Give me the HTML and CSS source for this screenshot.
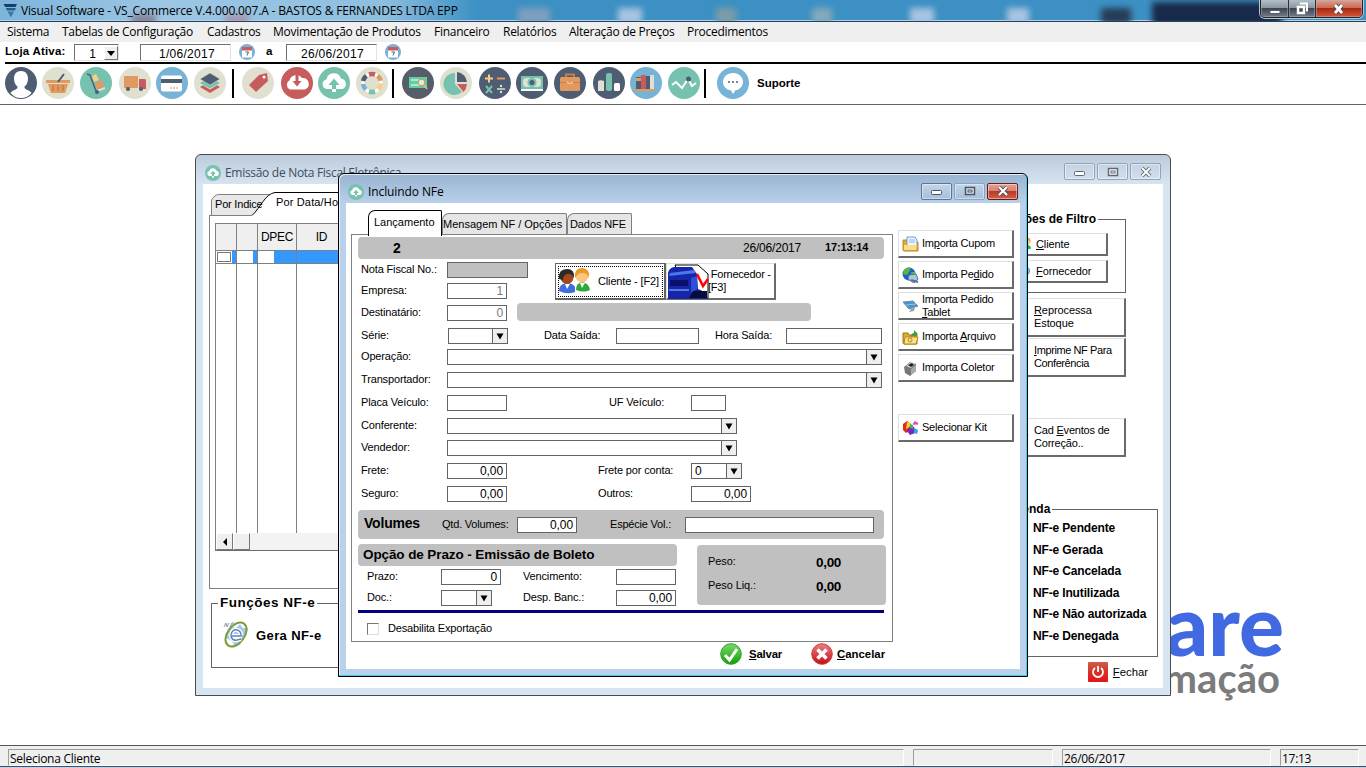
FILE: index.html
```html
<!DOCTYPE html>
<html lang="pt-BR">
<head>
<meta charset="utf-8">
<title>Visual Software - VS_Commerce</title>
<link rel="stylesheet" href="styles.css">
</head>
<body>
<svg class="defs" width="0" height="0">
  <symbol id="cloud" viewBox="0 0 32 32"><circle cx="16" cy="16" r="16" fill="#76c2af"/><path d="M9 22a4.800 4.800 0 0 1-.5-9.500 7.500 7.500 0 0 1 14.500-1 5.500 5.500 0 0 1 1.500 10.500h-6.500v-4h3.500L16 11.500 10.500 18H14v4z" fill="#fff"/><path d="M14 22h4v3h-4z" fill="#fff"/></symbol>
  <symbol id="cal" viewBox="0 0 16 16"><circle cx="8" cy="8" r="8" fill="#77b3d4"/><path d="M3 3.500h10v10H3z" fill="#fff"/><path d="M3 3h10v3.500H3z" fill="#c75c5c"/><path d="M6.500 8h3l-1.500 3.500" fill="none" stroke="#4f5d73"/></symbol>
  <symbol id="arrow" viewBox="0 0 16 16"><path d="M4 5h8l-2.500 4.500L8 12 6.500 9.500z" fill="#000"/></symbol>
  <symbol id="people" viewBox="0 0 34 26"><path d="M1 23q0-7 7-8 7 0 9 4v5q-8 3-16-1z" fill="#3d6fe0"/><path d="M18 22q0-7 6-8 7 1 8 8-6 3-14 0z" fill="#2fa83a"/><circle cx="9" cy="9.500" r="6.500" fill="#a4481a"/><path d="M1 11Q0 1 9 1q8 0 7 9Q13 5 9 6q-4 1-4 6z" fill="#2a2a2a"/><circle cx="24" cy="8" r="6.500" fill="#fbc580"/><path d="M17 10Q16 0 24 0q8 0 7 10-1-5-7-5-4 0-7 5z" fill="#e79a28"/><path d="M7 16l2 5 3-5M22 15l2 5 3-5" fill="#fff"/></symbol>
</svg>

<header class="titlebar">
  <i class="blob b1"></i><i class="blob b2"></i><i class="blob b3"></i><i class="blob b4"></i><i class="blob b5"></i><i class="blob b6"></i><i class="blob b7"></i><i class="blob b8"></i><i class="blob b9"></i><i class="blob b10"></i>
  <svg class="applogo" width="16" height="16" viewBox="0 0 16 16"><path d="M0 1h14l-1.500 3H1.500z" fill="#173f6b"/><path d="M2 5h11l-1.200 2.500H3.200z" fill="#285e90"/><path d="M4 8.500h7L7.500 15z" fill="#3978a8"/><path d="M0 1l7.500 14" stroke="#8fb8d8"/></svg>
  <span class="apptitle">Visual Software - VS_Commerce V.4.000.007.A - BASTOS &amp; FERNANDES LTDA EPP</span>
  <div class="appbtns">
    <span class="ab ab-min"><svg width="12" height="14"><path d="M1 8.500h10v3H1z" fill="#fff" stroke="#555d68"/></svg></span>
    <span class="ab ab-max"><svg width="14" height="14"><path d="M5 1.500h7v8" fill="none" stroke="#fff" stroke-width="2"/><path d="M3 5h6v6H3z" fill="none" stroke="#fff" stroke-width="2.500"/></svg></span>
    <span class="ab ab-close"><svg width="14" height="14"><path d="M3 3l7 8M10 3l-7 8" stroke="#4a4a58" stroke-width="4.500"/><path d="M3 3l7 8M10 3l-7 8" stroke="#fff" stroke-width="2.800"/></svg></span>
  </div>
</header>

<nav class="menu">
  <span class="i1">Sistema</span><span class="i2">Tabelas de Configuração</span><span class="i3">Cadastros</span><span class="i4">Movimentação de Produtos</span><span class="i5">Financeiro</span><span class="i6">Relatórios</span><span class="i7">Alteração de Preços</span><span>Procedimentos</span>
</nav>

<section class="filters">
  <b class="loja">Loja Ativa:</b>
  <span class="inset store"><span>1</span><i><svg width="9" height="6"><path d="M0 0h8L4 5z"/></svg></i></span>
  <span class="inset date d1">1/06/2017</span>
  <svg width="16" height="16"><use href="#cal"/></svg>
  <b class="to">a</b>
  <span class="inset date d2">26/06/2017</span>
  <svg width="16" height="16"><use href="#cal"/></svg>
</section>

<section class="toolbar">
  <svg class="ti" viewBox="0 0 32 32"><circle cx="16" cy="16" r="16" fill="#4f5d73"/><path d="M16 4c4.500 0 7 3 7 7.500 0 4-1.500 6.500-3.500 8 0 2 .5 2.500 4 4 1.500.7 2.500 1.500 3 2.500-2.500 3-6 5-10.500 5S8 29 5.500 26c.5-1 1.500-1.800 3-2.500 3.500-1.500 4-2 4-4-2-1.500-3.500-4-3.500-8C9 7 11.500 4 16 4z" fill="#fff"/></svg>
  <svg class="ti g5" viewBox="0 0 32 32"><circle cx="16" cy="16" r="16" fill="#e0e0d1"/><path d="M4 13h24v3H4zM6 17h20l-3 9H9z" fill="#e0995e"/><path d="M11 18v6M16 18v6M21 18v6" stroke="#c77f49" stroke-width="1.500"/><path d="M22 7l-6 8" stroke="#4f5d73" stroke-width="2"/></svg>
  <svg class="ti g6" viewBox="0 0 32 32"><circle cx="16" cy="16" r="16" fill="#76c2af"/><path d="M7 7l3 1 6 16" fill="none" stroke="#4f5d73" stroke-width="1.500"/><path d="M12 9l4-2 3 6-5 2z" fill="#f5cf87"/><path d="M15 16l6-3 3 7-6 3z" fill="#e0995e"/><path d="M17 24l8-3" stroke="#e0e0d1" stroke-width="2"/><circle cx="17" cy="25" r="2" fill="#4f5d73"/></svg>
  <svg class="ti g7" viewBox="0 0 32 32"><circle cx="16" cy="16" r="16" fill="#e0e0d1"/><path d="M5 9h14v12H5z" fill="#e0995e"/><path d="M20 12h6q1 0 1 2v8h-7z" fill="#c75c5c"/><circle cx="9" cy="22" r="2" fill="#4f5d73"/><circle cx="22" cy="22" r="2" fill="#4f5d73"/></svg>
  <svg class="ti g5" viewBox="0 0 32 32"><circle cx="16" cy="16" r="16" fill="#77b3d4"/><rect x="5" y="8.500" width="21" height="16" rx="2" fill="#fff"/><path d="M5 12h21v4H5z" fill="#4f5d73"/><path d="M14 21h2m1 0h2m1 0h2" stroke="#e0995e"/></svg>
  <svg class="ti g6" viewBox="0 0 32 32"><circle cx="16" cy="16" r="16" fill="#e0e0d1"/><path d="M16 14l10 6-10 6-10-6z" fill="#c75c5c"/><path d="M16 11l10 5.500-10 6-10-6z" fill="#e0e0d1"/><path d="M16 10l10 6-10 5.500L6 16z" fill="#76c2af"/><path d="M16 6l10 6-10 6-10-6z" fill="#4f5d73" stroke="#e0e0d1" stroke-width=".5"/></svg>
  <i class="sep s1"></i>
  <svg class="ti g8" viewBox="0 0 32 32"><circle cx="16" cy="16" r="16" fill="#e0e0d1"/><path d="M17 8l8-2 1 8-12 11-7-7z" fill="#c75c5c"/><circle cx="22" cy="10" r="1.500" fill="#fff"/></svg>
  <svg class="ti g7" viewBox="0 0 32 32"><circle cx="16" cy="16" r="16" fill="#c75c5c"/><path d="M9 22.500a5 5 0 0 1-.5-9A7 7 0 0 1 21 11a6 6 0 0 1 3 11.500z" fill="#fff"/><path d="M14.500 7h3v7h3L16 19.500 11.500 14h3z" fill="#c75c5c"/></svg>
  <svg class="ti g5"><use href="#cloud"/></svg>
  <svg class="ti g6" viewBox="0 0 32 32"><circle cx="16" cy="16" r="16" fill="#e0e0d1"/><circle cx="16" cy="16" r="9" fill="none" stroke="#fff" stroke-width="3"/><g fill="none" stroke-width="4.500"><path d="M13 7.500q3-1 6 0" stroke="#c75c5c"/><path d="M21.500 8.800q2.500 2 3.200 5" stroke="#e0995e"/><path d="M25 16.500q-.5 3.500-3 5.700" stroke="#f5cf87"/><path d="M19 24.500q-3 1-6 0" stroke="#76c2af"/><path d="M10 22.500q-2.500-2-3-5.500" stroke="#77b3d4"/><path d="M7 14q.8-3 3.300-5.200" stroke="#4f5d73"/></g></svg>
  <i class="sep s2"></i>
  <svg class="ti g8" viewBox="0 0 32 32"><circle cx="16" cy="16" r="16" fill="#565f69"/><rect x="7" y="10" width="18" height="11" fill="#5fcfa4"/><path d="M9 13h8M9 18h8" stroke="#fff"/><circle cx="19.500" cy="15.500" r="3.300" fill="#dceee2" stroke="#e98a4f"/><path d="M22 18l3 4" stroke="#f7b384" stroke-width="1.500"/></svg>
  <svg class="ti g6" viewBox="0 0 32 32"><circle cx="16" cy="16" r="16" fill="#e0e0d1"/><path d="M15 6v11l7 8A11 11 0 1 1 15 6z" fill="#76c2af"/><path d="M17 5a11 11 0 0 1 10 10H17z" fill="#4f5d73"/><path d="M17 17h10q-.5 5-3.500 8z" fill="#c75c5c"/></svg>
  <svg class="ti g7" viewBox="0 0 32 32"><circle cx="16" cy="16" r="16" fill="#4f5d73"/><path d="M6 11.500h8M10 7.500v8" stroke="#f5cf87" stroke-width="2"/><path d="M18 11.500h8" stroke="#e0995e" stroke-width="2"/><path d="M7 19l6 7M13 19l-6 7" stroke="#76c2af" stroke-width="2"/><path d="M18 22h8" stroke="#e0e0d1" stroke-width="1.500"/><circle cx="22" cy="19" r="1.200" fill="#e0e0d1"/><circle cx="22" cy="25" r="1.200" fill="#e0e0d1"/></svg>
  <svg class="ti g5" viewBox="0 0 32 32"><circle cx="16" cy="16" r="16" fill="#4f5d73"/><path d="M5 10h22v14H5z" fill="#fff"/><path d="M5 9h22v13H5z" fill="#76c2af"/><path d="M9 11h14l2 2v5l-2 2H9l-2-2v-5z" fill="#e0e0d1"/><circle cx="16" cy="15.500" r="4.500" fill="#76c2af"/><circle cx="16" cy="15.500" r="2.500" fill="#4f5d73"/></svg>
  <svg class="ti g6" viewBox="0 0 32 32"><circle cx="16" cy="16" r="16" fill="#4f5d73"/><path d="M12 10V7.500h8V10" fill="none" stroke="#c77f49" stroke-width="2"/><rect x="6" y="10" width="20" height="14" rx="1.500" fill="#e0995e"/><path d="M6 15.500h20" stroke="#c77f49"/><path d="M13 15q3 3 6 0" fill="none" stroke="#f5cf87" stroke-width="1.500"/></svg>
  <svg class="ti g7" viewBox="0 0 32 32"><circle cx="16" cy="16" r="16" fill="#4f5d73"/><path d="M5 14q2.500-1.500 6 0v10H5z" fill="#e0e0d1"/><rect x="13" y="6" width="6" height="18" rx="2" fill="#76c2af"/><rect x="21" y="16" width="6" height="8" rx="1.500" fill="#fff"/></svg>
  <svg class="ti g5" viewBox="0 0 32 32"><circle cx="16" cy="16" r="16" fill="#77b3d4"/><path d="M4 22h21v2H4z" fill="#e0995e"/><path d="M6 10h5v12H6z" fill="#4f5d73"/><path d="M6 11h5v3H6z" fill="#e0995e"/><path d="M11 8h5v14h-5z" fill="#c75c5c"/><path d="M16 9h4v13h-4z" fill="#4f5d73"/><path d="M20 8h4v14h-4z" fill="#e0e0d1"/></svg>
  <svg class="ti g6" viewBox="0 0 32 32"><circle cx="16" cy="16" r="16" fill="#76c2af"/><path d="M4 18l4-3 6 6 6-9 4 7 4-3" fill="none" stroke="#fff" stroke-width="2"/><circle cx="20.500" cy="12" r="2.500" fill="#4f5d73"/></svg>
  <i class="sep s3"></i>
  <svg class="ti g9" viewBox="0 0 32 32"><circle cx="16" cy="16" r="16" fill="#77b3d4"/><path d="M16 6c6 0 10 4 10 9 0 4-3 7.500-7.500 8.300L16 27l-2-3.600C9 22.800 6 19 6 15c0-5 4-9 10-9z" fill="#fff"/><path d="M11 15h2m2 0h2m2 0h2" stroke="#4f5d73" stroke-width="1.500"/></svg>
  <b class="suporte">Suporte</b>
</section>

<main class="desk">
  <div class="brand"><div class="brand1">are</div><div class="brand2">mação</div></div>

  <section class="win back">
    <div class="wtitle"><svg width="16" height="16"><use href="#cloud"/></svg><span>Emissão de Nota Fiscal Eletrônica</span>
      <div class="wbtns"><span class="wb"><svg width="12" height="10"><rect x=".5" y="4.500" width="10" height="4" rx="1" fill="#fff" stroke="#5f6776"/></svg></span><span class="wb"><svg width="12" height="10"><rect x="1.500" y="1.500" width="9" height="7" fill="#fff" stroke="#5f6776" stroke-width="1.500"/><rect x="4" y="4" width="4" height="2" fill="none" stroke="#5f6776"/></svg></span><span class="wb"><svg width="12" height="10"><path d="M2 1l8 8M10 1L2 9" stroke="#5f6776" stroke-width="3.800"/><path d="M2 1l8 8M10 1L2 9" stroke="#fff" stroke-width="1.800"/></svg></span></div>
    </div>
    <div class="wbody backbody">
      <div class="left">
        <div class="btabs"><svg width="190" height="25"><path d="M2.500 24V9q3-5 6-5.500h52L50 24" fill="#e8e8e8" stroke="#808080"/><path d="M43 24.500C52 16 56 3 66 1.500h124V25" fill="#fff" stroke="#000"/><path d="M0 24.500h43" stroke="#808080"/></svg><span class="bt1">Por Indice</span><span class="bt2">Por Data/Hora</span></div>
        <div class="bpanel">
          <div class="grid">
            <div class="gh"><span class="c1"></span><span class="c2"></span><span class="c3">DPEC</span><span class="c4">ID</span></div>
            <div class="gr"><span class="c1"><i class="w chk"></i></span><span class="c2"><i class="w"></i></span><span class="c3"><i class="w"></i></span><span class="c4"></span></div>
            <div class="gb"><span class="c1"></span><span class="c2"></span><span class="c3"></span><span class="c4"></span></div>
            <div class="gs"><i><svg width="6" height="8"><path d="M5 0v8L1 4z"/></svg></i><i></i></div>
          </div>
        </div>
        <fieldset class="funcs"><legend>Funções NF-e</legend><div class="gera"><svg width="28" height="28" viewBox="0 0 28 28"><path d="M8 5l6 2 4-4 3 4 5 0-2 8-4 3-2 6-5 2-3-6-6-3 1-5z" fill="#a8c8f2"/><ellipse cx="14" cy="13.500" rx="8.500" ry="13.500" transform="rotate(36 14 13.500)" fill="none" stroke="#7a9f38" stroke-width="2"/><path d="M20 15H9q1 5 6 4l4-1M9 14q1-6 6-5 4 1 4 5" fill="none" stroke="#fff" stroke-width="4"/><path d="M20 15H9q1 5 6 4l4-1M9 14q1-6 6-5 4 1 4 5" fill="none" stroke="#6285b1" stroke-width="1.500"/><path d="M2 6l2-4 1 4 2-4M8 6l2-4h2" fill="none" stroke="#8695a8"/></svg><b>Gera NF-e</b></div></fieldset>
      </div>
      <div class="right">
        <fieldset class="filtro"><legend>Opções de Filtro</legend><div class="btn fb"><svg width="17" height="14"><use href="#people"/></svg><span><u>C</u>liente</span></div><div class="btn fb"><svg width="17" height="14"><circle cx="10" cy="7" r="4.500" fill="#9fd0f0" stroke="#3f85c0"/></svg><span><u>F</u>ornecedor</span></div></fieldset>
        <div class="btn rb r1"><svg width="12" height="12"><circle cx="5" cy="7" r="2.500" fill="#d32a16"/></svg><span><u>R</u>eprocessa<br>Estoque</span></div>
        <div class="btn rb r2"><span><u>I</u>mprime NF Para<br>Conferência</span></div>
        <div class="btn rb r3"><svg width="12" height="20"><path d="M6 5l2 3-2 3zM5 16l3 2" stroke="#777" fill="#777"/></svg><span>Cad <u>E</u>ventos de<br>Correção..</span></div>
        <fieldset class="legenda"><legend>Legenda</legend><b>NF-e Pendente</b><b>NF-e Gerada</b><b>NF-e Cancelada</b><b>NF-e Inutilizada</b><b>NF-e Não autorizada</b><b>NF-e Denegada</b></fieldset>
        <div class="fechar"><svg width="20" height="20"><defs><linearGradient id="rg" x2="0" y2="1"><stop stop-color="#c9604a"/><stop offset=".5" stop-color="#d93126"/><stop offset="1" stop-color="#e5131b"/></linearGradient></defs><rect width="20" height="20" rx="1" fill="url(#rg)"/><path d="M7 6a5 5 0 1 0 6 0M10 4v6" fill="none" stroke="#fff" stroke-width="1.800"/></svg><span><u>F</u>echar</span></div>
      </div>
    </div>
  </section>

  <section class="win front">
    <div class="wtitle"><svg width="16" height="16"><use href="#cloud"/></svg><span>Incluindo NFe</span>
      <div class="wbtns"><span class="wb"><svg width="12" height="10"><rect x=".5" y="4.500" width="10" height="4" rx="1" fill="#fff" stroke="#4a5160"/></svg></span><span class="wb dim"><svg width="12" height="10"><rect x="1.500" y="1.500" width="9" height="7" fill="#e8eef5" stroke="#4a5160" stroke-width="1.500"/><rect x="4" y="4" width="4" height="2" fill="none" stroke="#4a5160"/></svg></span><span class="wb red"><svg width="12" height="10"><path d="M2 1l8 8M10 1L2 9" stroke="#5a4a52" stroke-width="4"/><path d="M2 1l8 8M10 1L2 9" stroke="#fff" stroke-width="2.200"/></svg></span></div>
    </div>
    <div class="wbody frontbody">
      <div class="formcol">
        <div class="tabs"><span class="tab on">Lançamento</span><span class="tab t2">Mensagem NF / Opções</span><span class="tab t3">Dados NFE</span></div>
        <div class="panel">
          <div class="gbar head"><b class="num">2</b><span class="hd">26/06/2017</span><b class="hh">17:13:14</b></div>
          <div class="rows">
            <div class="row"><label>Nota Fiscal No.:</label><span class="f w81 off"></span>
              <div class="bigbtns"><div class="btn big focus"><svg width="34" height="26"><use href="#people"/></svg><span>Cliente - [F2]</span></div><div class="btn big"><svg class="truck" width="42" height="35" viewBox="0 0 42 35"><path d="M8 1h23l10 9v24H20z" fill="#fff" stroke="#000"/><path d="M1 9q1-5 6-6h18l5 7 1 15q8 2 9 10H1z" fill="#1726a8"/><path d="M3 9l24-3 2 3-27 3z" fill="#4c78ee"/><path d="M3 16h18v6H3z" fill="#0b1166"/><path d="M2 25h20v2H2z" fill="#5578e8"/><path d="M24 14l6-2v13l-6 4z" fill="#2d50d8"/><path d="M26 27h14v7H22z" fill="#080d3c"/><path d="M30 10l6 12 5-7" fill="none" stroke="#f00" stroke-width="2.500"/></svg><span class="forn">&nbsp;Fornecedor -<br>[F3]</span></div></div>
            </div>
            <div class="row m5"><label>Empresa:</label><span class="f w60 n ro">1</span></div>
            <div class="row m6"><label>Destinatário:</label><span class="f w60 n ro">0</span><span class="dest"></span></div>
            <div class="row m7"><label>Série:</label><span class="f w60 combo x1"><svg width="16" height="14"><use href="#arrow"/></svg></span><label class="la">Data Saída:</label><span class="f w83"></span><label class="lb">Hora Saída:</label><span class="f w96"></span></div>
            <div class="row m5"><label>Operação:</label><span class="f w435 combo"><svg width="16" height="14"><use href="#arrow"/></svg></span></div>
            <div class="row m7"><label>Transportador:</label><span class="f w435 combo"><svg width="16" height="14"><use href="#arrow"/></svg></span></div>
            <div class="row m7"><label>Placa Veículo:</label><span class="f w60"></span><label class="lc">UF Veículo:</label><span class="f w35"></span></div>
            <div class="row m7"><label>Conferente:</label><span class="f w290 combo"><svg width="16" height="14"><use href="#arrow"/></svg></span></div>
            <div class="row m6"><label>Vendedor:</label><span class="f w290 combo"><svg width="16" height="14"><use href="#arrow"/></svg></span></div>
            <div class="row m7"><label>Frete:</label><span class="f w60 n">0,00</span><label class="ld">Frete por conta:</label><span class="f w51 combo">0<svg width="16" height="14"><use href="#arrow"/></svg></span></div>
            <div class="row m7"><label>Seguro:</label><span class="f w60 n">0,00</span><label class="ld">Outros:</label><span class="f w60 n">0,00</span></div>
          </div>
          <div class="gbar vol"><b>Volumes</b><label class="lq">Qtd. Volumes:</label><span class="f w60 n vq">0,00</span><label class="le">Espécie Vol.:</label><span class="f w189"></span></div>
          <div class="lower">
            <div class="prazo">
              <div class="gbar op"><b>Opção de Prazo - Emissão de Boleto</b></div>
              <div class="row p1"><label>Prazo:</label><span class="f w60 n">0</span><label class="lv">Vencimento:</label><span class="f w60"></span></div>
              <div class="row p2"><label>Doc.:</label><span class="f w51 combo"><svg width="16" height="14"><use href="#arrow"/></svg></span><label class="lw">Desp. Banc.:</label><span class="f w60 n">0,00</span></div>
            </div>
            <div class="gbar peso"><div><span>Peso:</span><b>0,00</b></div><div><span>Peso Liq.:</span><b>0,00</b></div></div>
          </div>
          <div class="navy"></div>
          <div class="desab"><i></i><span>Desabilita Exportação</span></div>
        </div>
        <div class="actions">
          <svg width="22" height="22"><defs><linearGradient id="gg" x2="0" y2="1"><stop stop-color="#7ad86a"/><stop offset="1" stop-color="#12a008"/></linearGradient><linearGradient id="r2" x2="0" y2="1"><stop stop-color="#ea7f82"/><stop offset="1" stop-color="#c40d16"/></linearGradient></defs><circle cx="11" cy="11" r="10.300" fill="url(#gg)" stroke="#2ca522"/><path d="M5 12l4.500 5L17 6" fill="none" stroke="#fff" stroke-width="3"/></svg><b class="sv"><u>S</u>alvar</b>
          <svg width="22" height="22"><circle cx="11" cy="11" r="10.300" fill="url(#r2)" stroke="#cf3c42"/><path d="M6.500 6.500l9 9M15.500 6.500l-9 9" stroke="#fff" stroke-width="3.600"/></svg><b class="cc"><u>C</u>ancelar</b>
        </div>
      </div>
      <div class="side">
        <div class="btn sb"><svg width="18" height="16"><path d="M1 4h4l1 2h10v9H2q-1 0-1-2z" fill="#e0ab35" stroke="#b8862a"/><path d="M5 1h8l2 3v6H5z" fill="#eaf4ff" stroke="#6e9fcc"/><path d="M7 4h6M7 6h6" stroke="#8db8e0"/><path d="M2 9h13l-1 5H2z" fill="#fadd86"/></svg><span>Im<u>p</u>orta Cupom</span></div>
        <div class="btn sb"><svg width="18" height="16"><circle cx="7" cy="7" r="6.500" fill="#2460c0"/><path d="M2 3q4-4 7-2L7 5 5 8 1 7zM9 5l4 0v4l-3 1z" fill="#54b848"/><path d="M7 8l7-1 2 5-4 4-6-4z" fill="#a9c7e3" stroke="#527499"/><path d="M9 13l7 2" stroke="#527499" stroke-width="2"/></svg><span>Importa Pe<u>d</u>ido</span></div>
        <div class="btn sb"><svg width="18" height="16"><path d="M1 4l10-1 5 5-9 3z" fill="#4795d1" stroke="#7d8790"/><path d="M9 11l-2 3 5-1 1-4z" fill="#9aa2aa"/><path d="M4 7l10-1" stroke="#8fc3ea"/></svg><span>Importa Pedido<br><u>T</u>ablet</span></div>
        <div class="btn sb"><svg width="18" height="16"><path d="M1 4h5l1 2h8v9H2q-1 0-1-2z" fill="#e0a92c" stroke="#9c7419"/><path d="M3 8h13l-2 7H2z" fill="#fbe087" stroke="#b88a25"/><path d="M9 8q0-4 3-4V1l4 4-4 3V6" fill="#3e9a3a"/><circle cx="8" cy="11" r="2" fill="none" stroke="#b88a25"/></svg><span>Importa <u>A</u>rquivo</span></div>
        <div class="btn sb"><svg width="18" height="16"><path d="M2 7l6-5 6 2v7l-6 5-5-3z" fill="#777"/><path d="M4 6l5-4 4 2-4 4z" fill="#d8d8d8"/><path d="M6 5l4-2 2 2-3 2z" fill="#222"/><path d="M9 9l5-4v6l-5 4z" fill="#aaa"/></svg><span>Importa Coletor</span></div>
        <div class="btn sb kit"><svg width="18" height="16"><path d="M1 4l4-3 4 3v6l-5 3-3-3z" fill="#e22a20"/><path d="M5 2l3 1v4l-4 2z" fill="#f4d823"/><path d="M8 6l4 1 1 6-5 2-3-4z" fill="#7c24c4"/><path d="M8 4l3 1v4L8 8z" fill="#31c141"/><path d="M12 8l4 2-1 4-3-1z" fill="#24a6df"/><path d="M12 2l4 2M11 4l4-1" stroke="#d84bd8" stroke-width="2"/></svg><span>Selecionar Kit</span></div>
      </div>
    </div>
  </section>
</main>

<footer class="status"><span class="st1">Seleciona Cliente</span><span class="st2"></span><span class="st3">26/06/2017</span><span class="st4">17:13</span></footer>
</body>
</html>
```
FILE: styles.css
```css
* { box-sizing: border-box; }
body { margin: 0; width: 1366px; height: 768px; overflow: hidden; background: #fff; color: #000; font: 11px/13px "Liberation Sans", Arial, sans-serif; display: flex; flex-direction: column; position: relative; }
.defs { position: absolute; }
i { font-style: normal; display: inline-block; }
svg { display: block; flex: none; }
u { text-underline-offset: 1px; }

.titlebar { height: 22px; flex: none; display: flex; align-items: center; position: relative; overflow: hidden; padding-left: 3px; background: linear-gradient(90deg, #7db4da 0, #9cc6e4 12%, #8fbfdf 28%, #3c90c3 35%, #3c90c3 100%); border-bottom: 1px solid #24425f; box-shadow: inset 0 -1px #b4d2e8; }
.applogo { margin-right: 2px; position: relative; }
.apptitle { font: 12px/20px "Open Sans", "Noto Sans", sans-serif; letter-spacing: -.16px; white-space: nowrap; position: relative; }
.blob { position: absolute; filter: blur(3px); top: 8px; width: 24px; height: 16px; background: #a9c4e2; }
.b1 { left: 518px; width: 32px; background: #7f9fbf; }
.b2 { left: 618px; }
.b3 { left: 716px; width: 20px; background: #7c9ca8; }
.b4 { left: 812px; width: 20px; background: #84aabb; }
.b5 { left: 910px; }
.b6 { left: 1007px; width: 22px; }
.b7 { left: 1101px; width: 30px; background: #263c55; }
.b8 { left: 1152px; top: 2px; width: 130px; height: 24px; background: #182a49; }
.b9 { left: 132px; top: 14px; width: 24px; background: #77566a; opacity: .6; }
.b10 { left: 225px; top: 14px; width: 24px; background: #b36b84; opacity: .5; }
.appbtns { position: absolute; left: 1260px; top: -1px; display: flex; height: 19px; width: 103px; border: 1px solid #20242c; border-radius: 0 0 5px 5px; overflow: hidden; box-shadow: 0 0 0 1px #b9c4cc; }
.ab { display: flex; align-items: center; justify-content: center; border-right: 1px solid #2b2f36; background: linear-gradient(#b4c0c8 0, #8c969f 45%, #3f4653 50%, #737c88 100%); box-shadow: inset 0 0 0 1px #aeb8c077; }
.ab-min { width: 28px; }
.ab-max { width: 27px; }
.ab-close { flex: 1; border: 0; background: linear-gradient(#dca193 0, #cc6955 45%, #a72a12 50%, #d4553b 100%); }

.menu { height: 20px; flex: none; background: #efefef; display: flex; padding-left: 7px; font: 12px/19px "Open Sans", "Noto Sans", sans-serif; letter-spacing: -.28px; white-space: nowrap; }
.i1 { width: 55px; } .i2 { width: 145px; } .i3 { width: 66px; } .i4 { width: 161px; } .i5 { width: 69px; } .i6 { width: 66px; } .i7 { width: 118px; }

.filters { height: 20px; flex: none; display: flex; align-items: flex-start; padding: 2px 0 0 5px; }
.loja { width: 69px; line-height: 15px; font-size: 11.500px; letter-spacing: .2px; white-space: nowrap; }
.inset { height: 17px; border: 1px solid #e2e2e2; border-top-color: #707070; border-left-color: #707070; font-size: 12px; line-height: 18px; text-align: right; background: #fff; }
.store { width: 45px; display: flex; justify-content: flex-end; gap: 8px; }
.store i { width: 14px; height: 14px; margin-top: 1px; background: #efefef; border: 1px solid; border-color: #fff #777 #777 #fff; padding: 4px 0 0 2px; }
.date { width: 91px; padding-right: 15px; margin-right: 8px; letter-spacing: .3px; }
.d1 { margin-left: 21px; }
.d2 { padding-right: 12px; }
.to { margin-left: 11px; width: 20px; line-height: 15px; font-size: 11.500px; }

.toolbar { height: 43px; flex: none; display: flex; align-items: center; border-bottom: 1px solid #646464; padding-left: 5px; background: linear-gradient(#000, #000) 5px 0 / 100% 2px no-repeat; }
.ti { width: 32px; height: 32px; margin-bottom: 1px; }
.g5 { margin-left: 5px; } .g6 { margin-left: 6px; } .g7 { margin-left: 7px; } .g8 { margin-left: 8px; } .g9 { margin-left: 11px; }
.sep { width: 2px; height: 29px; background: #000; }
.s1 { margin-left: 6px; } .s2 { margin-left: 4px; } .s3 { margin-left: 4px; }
.suporte { margin-left: 8px; font-size: 11.500px; }

.desk { flex: 1; position: relative; }
.brand { position: absolute; right: 82px; top: 478px; font-family: Lato, sans-serif; font-weight: 700; text-align: right; }
.brand1 { font-size: 84px; line-height: 81px; color: #4169e1; font-weight: 900; }
.brand2 { font-size: 40px; line-height: 36px; margin: -4px 4px 0 0; color: #7b7b7b; }

/* windows */
.win { position: absolute; border: 1px solid #4b4b4b; border-radius: 6px 6px 0 0; padding: 0 7px 7px; display: flex; flex-direction: column; }
.wtitle { height: 29px; flex: none; display: flex; align-items: center; font: 12px/16px "Open Sans", "Noto Sans", sans-serif; letter-spacing: -.1px; }
.wtitle > span { margin-left: 4px; white-space: nowrap; }
.wbody { flex: 1; background: #fff; display: flex; min-height: 0; }
.wbtns { margin: -2px 1px 0 auto; display: flex; gap: 2px; }
.wb { width: 31px; height: 17px; border: 1px solid #7f91ad; border-radius: 2px; box-shadow: inset 0 0 0 1px #ffffff70; display: flex; align-items: center; justify-content: center; }
.back { left: 195px; top: 49px; width: 976px; height: 542px; background: linear-gradient(#bccbdb, #d7e4f2 30px); }
.back .wtitle { color: #444d58; padding: 6px 1px 0 2px; letter-spacing: -.3px; }
.back .wb { border-color: #94a3bb; }
.front { left: 338px; top: 68px; width: 690px; height: 504px; background: linear-gradient(#99b4d1, #b9d1ea 30px); border-color: #000; box-shadow: inset -1px -1px #40cfe6, inset 1px 1px #e4eef8; }
.front .wtitle { padding: 7px 1px 0 2px; }
.front .wb { background: linear-gradient(#c3d5e8, #a6bfda); border-color: #5d7596; }
.front .dim { border-color: #8aa4c4; }
.front .red { border-color: #641c1c; background: linear-gradient(#e4a091 0, #d9816f 48%, #b93b26 50%, #ce604a); }

.btn { background: #fff; border: 1px solid; border-color: #dedede #6a6a6a #6a6a6a #dedede; border-width: 1px 2px 2px 1px; display: flex; align-items: center; white-space: nowrap; line-height: 13px; }

/* back window */
.backbody { justify-content: space-between; }
.left { width: 190px; padding: 7px 0 0 6px; display: flex; flex-direction: column; }
.btabs { height: 25px; flex: none; position: relative; }
.bt1 { position: absolute; left: 6px; top: 7px; letter-spacing: -.2px; }
.bt2 { position: absolute; left: 67px; top: 5px; letter-spacing: .15px; }
.bpanel { height: 373px; flex: none; width: 300px; border: 1px solid #808080; border-top: 0; padding: 7px 0 0 5px; }
.grid { height: 328px; border: 1px solid #808080; border-right: 0; border-bottom: 2px solid #6c6c6c; }
.gh, .gr, .gb { display: flex; }
.gh { height: 26px; background: #efefef; line-height: 26px; text-align: center; font-size: 12px; letter-spacing: -.3px; }
.gr { height: 14px; background: #3399ff; border: 1px solid #808080; border-width: 1px 0; }
.gb { height: 269px; }
.grid span { border-right: 1px solid #808080; flex: none; display: flex; justify-content: center; }
.c1 { width: 21px; } .c2 { width: 21px; } .c3 { width: 39px; } .c4 { width: 50px; }
.gr span { justify-content: flex-start; }
.w { width: 16px; height: 12px; background: #fff; }
.chk { outline: 1px solid #777; outline-offset: -2px; }
.gs { height: 17px; background: #f3f3f3; display: flex; }
.gs i { width: 17px; background: #efefef; border: 1px solid; border-color: #fff #777 #777 #fff; padding: 4px 0 0 5px; }
fieldset { border: 1px solid #646464; margin: 0; min-width: 0; padding: 0; }
legend { font-weight: 700; padding: 0 2px; }
.funcs { width: 300px; height: 73px; margin: 6px 0 0 2px; }
.funcs legend { margin-left: 6px; font-size: 13.500px; line-height: 16px; letter-spacing: .5px; }
.gera { display: flex; align-items: center; gap: 6px; padding: 10px 0 0 10px; font-size: 13px; letter-spacing: .4px; }
.right { width: 180px; padding-top: 28px; display: flex; flex-direction: column; align-items: flex-end; }
.filtro { width: 180px; height: 81px; margin-right: 37px; padding: 7px 17px 0 22px; display: flex; flex-direction: column; align-items: flex-end; }
.filtro legend { margin-left: auto; margin-right: 10px; font-size: 12px; line-height: 14px; }
.filtro .fb { width: 110px; height: 23px; margin-bottom: 4px; padding-left: 16px; gap: 4px; }
.rb { width: 140px; height: 39px; margin-right: 37px; padding-left: 47px; letter-spacing: -.1px; }
.rb svg { margin: 0 2px 0 -14px; }
.fb span { letter-spacing: -.1px; }
.r1 { margin-top: 5px; }
.r2 { margin-top: 1px; letter-spacing: -.4px; }
.r3 { margin-top: 41px; letter-spacing: -.2px; }
.legenda { width: 170px; height: 154px; margin: 46px 5px 0 0; padding: 2px 0 0 44px; display: flex; flex-direction: column; font-size: 12px; line-height: 21.600px; letter-spacing: -.15px; }
.legenda legend { margin-left: -34px; font-size: 12px; line-height: 13px; letter-spacing: 0; }
.fechar { display: flex; align-items: center; gap: 5px; margin: 5px 15px 0 0; font-size: 11.300px; }

/* front window */
.frontbody { justify-content: space-between; }
.formcol { width: 546px; padding: 7px 0 0 5px; display: flex; flex-direction: column; }
.tabs { height: 25px; flex: none; display: flex; align-items: flex-end; padding-left: 17px; white-space: nowrap; }
.tab { height: 22px; background: #e5e5e5; border: 1px solid #808080; border-bottom: 0; border-radius: 7px 2px 0 0; line-height: 20px; font-size: 11px; padding-left: 2px; }
.tab.on { width: 74px; height: 26px; background: #fff; border-color: #000; padding-left: 5px; margin-bottom: -1px; position: relative; line-height: 22px; }
.t2 { width: 125px; padding-left: 0; }
.t3 { width: 65px; letter-spacing: -.1px; }
.panel { width: 542px; height: 408px; flex: none; border: 1px solid #808080; margin-top: -1px; padding: 2px 0 0 6px; }
.gbar { background: #c0c0c0; border-radius: 4px; display: flex; }
.head { width: 526px; height: 22px; align-items: center; padding-left: 35px; margin-bottom: 3px; }
.num { width: 350px; font-size: 14px; }
.hd { width: 82px; font-size: 12px; letter-spacing: -.2px; }
.hh { font-size: 11px; margin-top: -2px; letter-spacing: -.1px; }
.rows { padding-left: 3px; height: 248px; }
.row { display: flex; height: 16px; align-items: flex-start; line-height: 14px; }
.row.m5 { margin-top: 5px; } .row.m6 { margin-top: 6px; } .row.m7 { margin-top: 7px; }
.row > label { width: 86px; flex: none; white-space: nowrap; letter-spacing: -.15px; }
.f { height: 16px; border: 1px solid #646464; background: #fff; flex: none; font-size: 12px; line-height: 15px; padding: 0 3px; letter-spacing: -.1px; }
.n { text-align: right; }
.ro { color: #7a7a7a; }
.off { background: #c0c0c0; }
.combo { display: flex; padding-right: 0; justify-content: space-between; }
.combo svg { background: #efefef; border-left: 1px solid #646464; width: 15px; margin-left: auto; }
.w35 { width: 35px; } .w51 { width: 51px; } .w60 { width: 60px; } .w81 { width: 81px; } .w83 { width: 83px; } .w96 { width: 96px; } .w189 { width: 189px; } .w290 { width: 290px; } .w435 { width: 435px; }
.x1 { margin-left: 1px; }
.bigbtns { display: flex; gap: 1px; margin: 1px 0 0 27px; }
.big { width: 111px; height: 37px; padding-left: 2px; letter-spacing: -.15px; }
.big span { margin-left: 6px; }
.focus { border: 1px solid #646464; border-width: 1px 2px 2px 1px; outline: 1px dotted #000; outline-offset: -4px; }
.big + .big { width: 110px; padding-left: 0; letter-spacing: -.25px; margin-left: -1px; }
.big .forn { margin: -1px 0 0 -1px; }
.dest { width: 294px; height: 18px; margin: -2px 0 0 10px; background: #c0c0c0; border-radius: 4px; }
.row > .la { margin-left: 36px; width: 72px; }
.row > .lb { margin-left: 16px; width: 71px; }
.row > .lc { margin-left: 102px; width: 82px; }
.row > .ld { margin-left: 91px; width: 93px; }
.vol { width: 526px; height: 29px; padding: 7px 0 0 6px; line-height: 14px; letter-spacing: -.2px; }
.vol b { width: 78px; font-size: 14px; line-height: 13px; }
.lq { width: 75px; } .le { margin-left: 33px; width: 75px; }
.lower { display: flex; gap: 20px; margin-top: 5px; height: 66px; }
.prazo { width: 319px; }
.op { height: 22px; padding: 0 0 0 5px; font-size: 13.500px; line-height: 21px; white-space: nowrap; letter-spacing: -.1px; }
.p1 { margin-top: 3px; padding-left: 9px; } .p2 { margin-top: 5px; padding-left: 9px; }
.p1 > label, .p2 > label { width: 74px; }
.row > .lv { margin-left: 22px; width: 93px; }
.row > .lw { margin-left: 31px; width: 93px; }
.peso { width: 189px; height: 60px; margin-top: 1px; padding: 10px 11px; flex-direction: column; gap: 9px; letter-spacing: -.1px; }
.peso div { display: flex; line-height: 13px; }
.peso span { width: 108px; }
.peso b { font-size: 13.500px; line-height: 15px; letter-spacing: -.3px; }
.navy { width: 526px; height: 3px; background: #000080; }
.desab { display: flex; align-items: center; gap: 9px; margin: 9px 0 0 9px; letter-spacing: -.15px; }
.desab i { width: 12px; height: 12px; border: 1px solid; border-color: #777 #ddd #ddd #777; }
.actions { display: flex; align-items: center; margin: 1px 0 0 369px; font-size: 11.400px; white-space: nowrap; }
.sv { margin-left: 7px; width: 62px; letter-spacing: -.2px; } .cc { margin-left: 4px; }
.side { width: 122px; padding-top: 27px; display: flex; flex-direction: column; gap: 3px; }
.sb { width: 116px; height: 28px; padding-left: 3px; gap: 2px; letter-spacing: -.22px; }
.kit { margin-top: 29px; }

.status { height: 23px; flex: none; border-top: 1px solid #555; background: linear-gradient(#efefef, #efefef) 0 0 / 100% 20px no-repeat, linear-gradient(#3f5062, #3f5062) 0 20px / 100% 1px no-repeat, #b9d1ea; display: flex; gap: 9px; padding: 3px 0 0 8px; font: 12px/17px "Open Sans", "Noto Sans", sans-serif; letter-spacing: -.28px; }
.status span { height: 17px; border: 1px solid; border-color: #9c9c9c #fff #fff #9c9c9c; padding-left: 1px; }
.st1 { width: 896px; } .st2 { width: 140px; } .st3 { width: 209px; } .st4 { width: 79px; }
```
